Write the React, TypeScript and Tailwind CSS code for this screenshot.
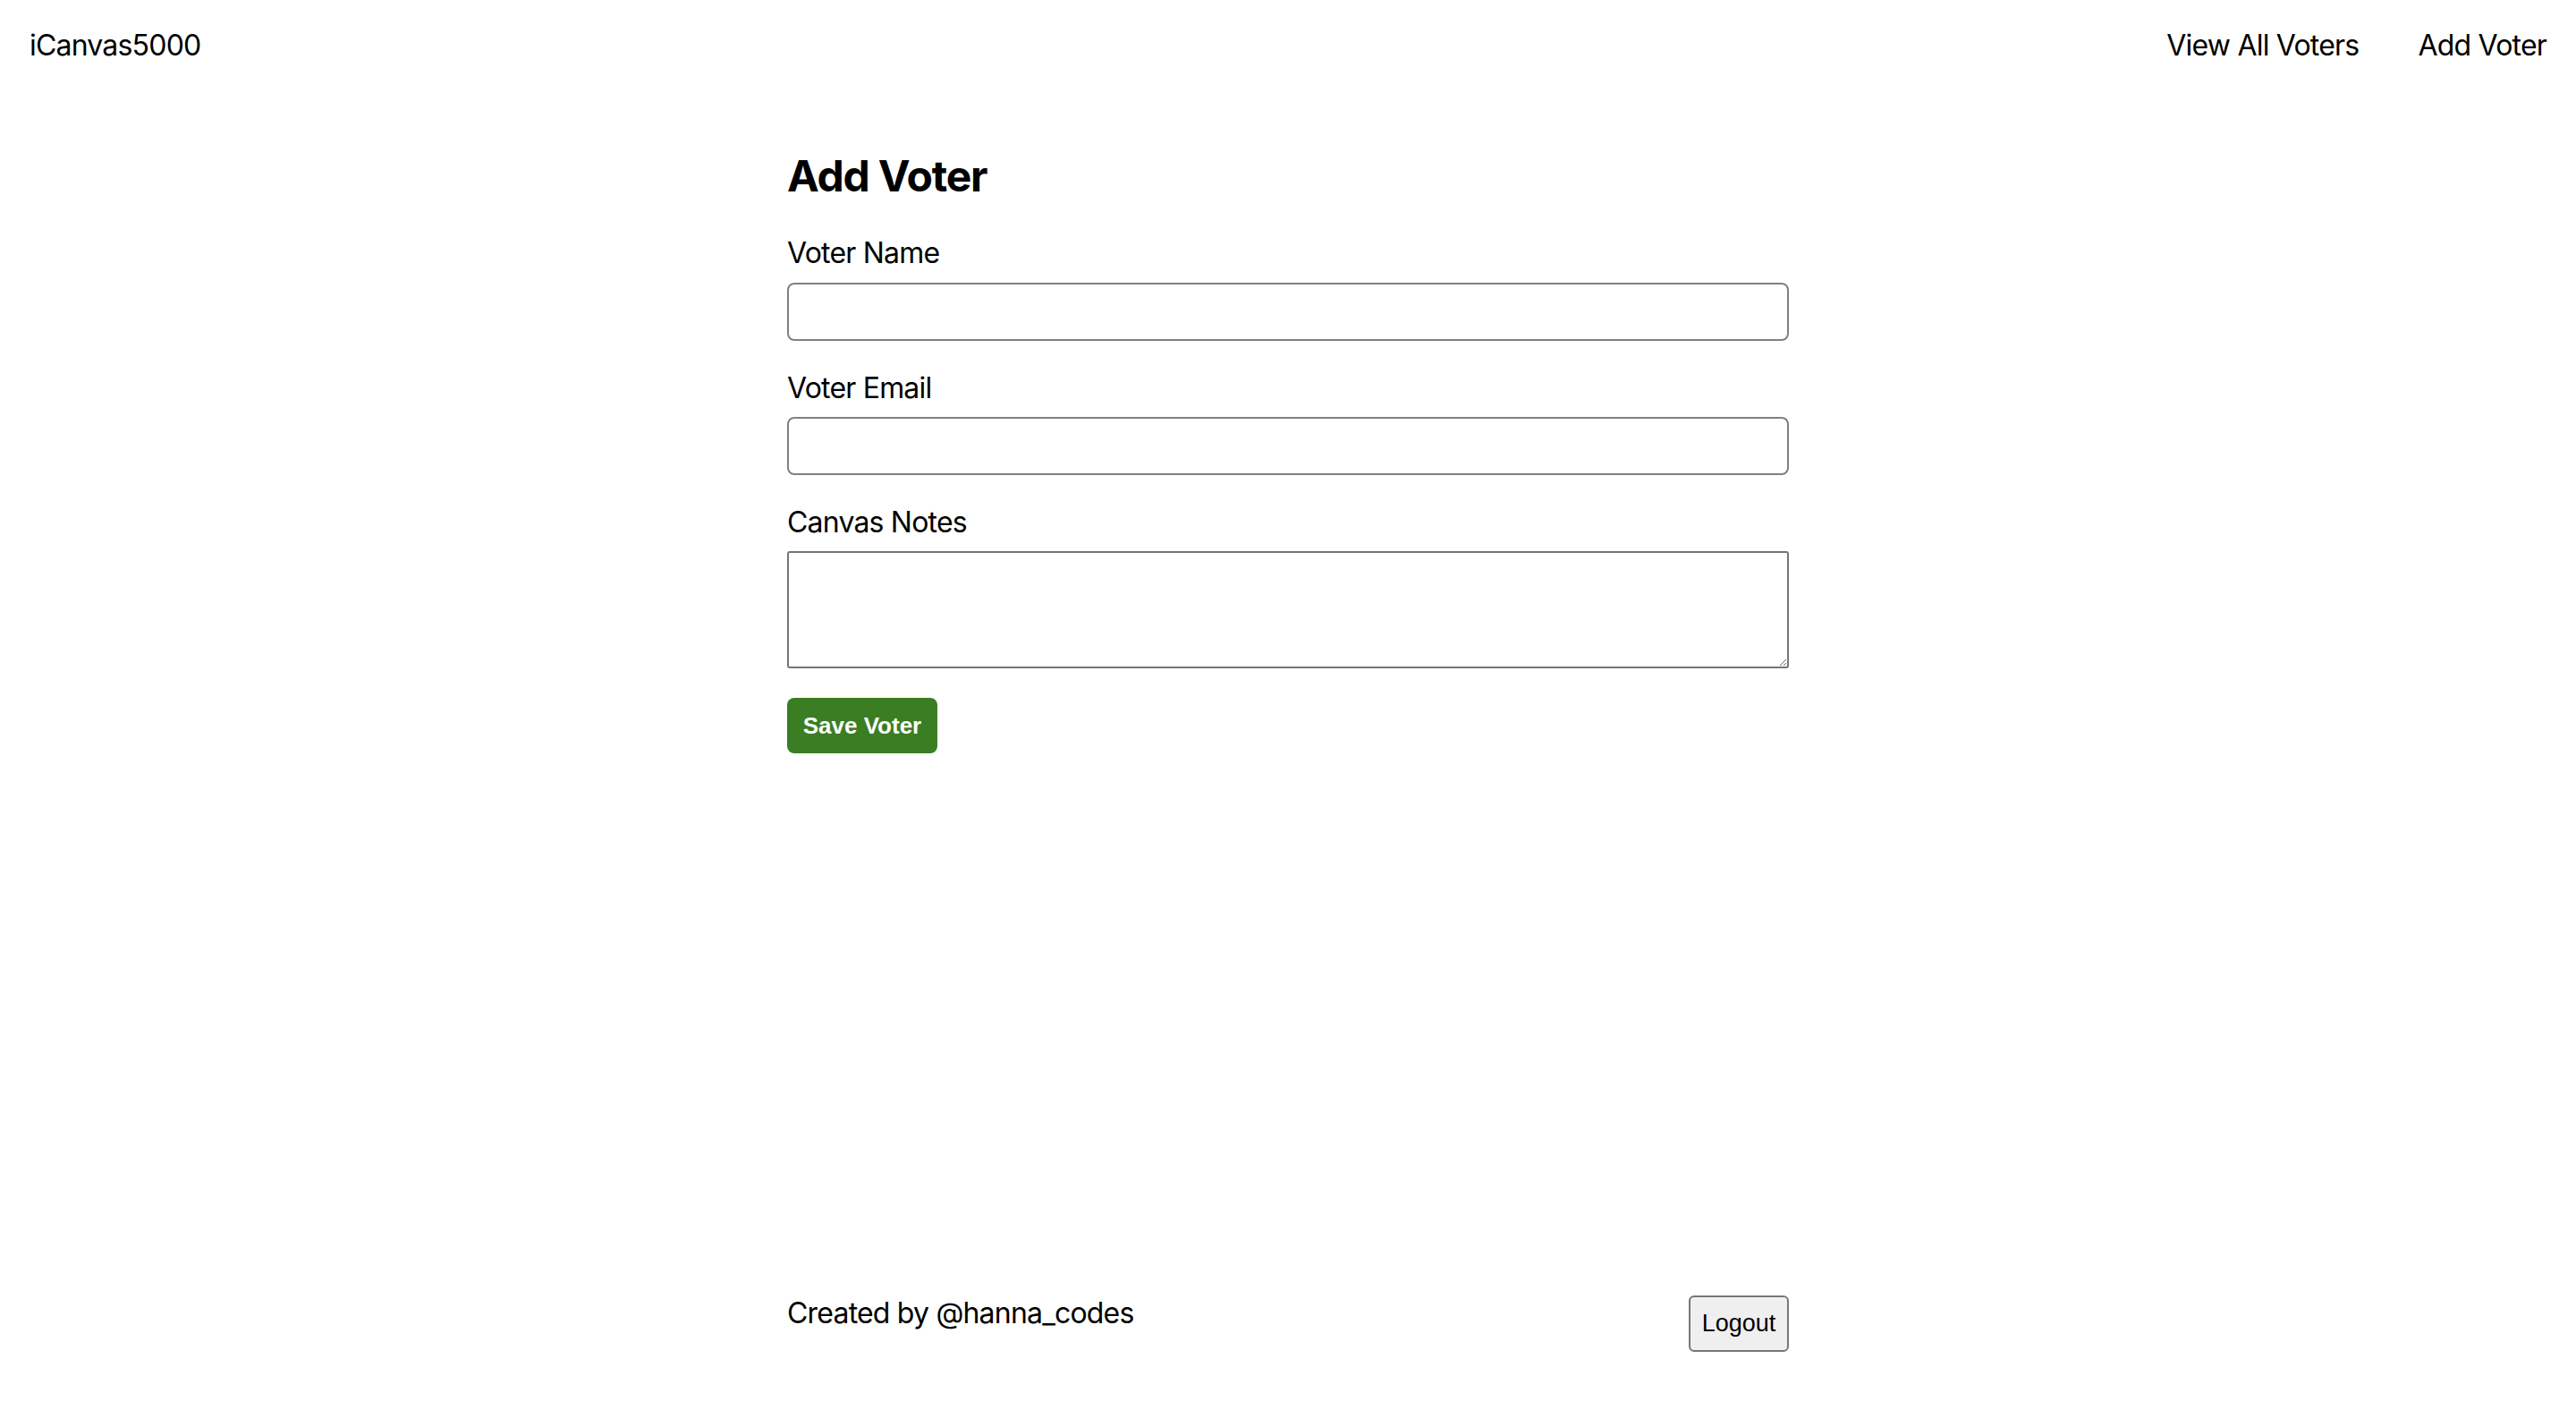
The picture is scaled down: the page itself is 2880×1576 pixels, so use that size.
export default function App() {
    return (
        <div className="min-h-screen flex flex-col bg-white text-black font-['Inter',sans-serif] tracking-[-0.8px]">
            {/* NAV */}
            <header className="h-[100px] flex items-center justify-between px-[33px] pt-[2px] text-[32px]">
                <a className="text-black">iCanvas5000</a>
                <nav className="flex items-center gap-[66px]">
                    <a className="text-black">View All Voters</a>
                    <a className="text-black">Add Voter</a>
                </nav>
            </header>

            {/* FORM */}
            <main className="flex-1 w-[1120px] mx-auto pt-[68px]">
                <h2 className="text-[48px] font-bold leading-[58px] tracking-[-1.2px]">Add Voter</h2>

                <form className="mt-[38px] flex flex-col">
                    <label className="text-[32px] leading-[38px]">Voter Name</label>
                    <input
                        type="text"
                        className="mt-[14px] h-[65px] w-full rounded-[8px] border-2 border-[#808080] px-3 text-[28px]"
                    />

                    <label className="mt-[34px] text-[32px] leading-[38px]">Voter Email</label>
                    <input
                        type="email"
                        className="mt-[13px] h-[65px] w-full rounded-[8px] border-2 border-[#808080] px-3 text-[28px]"
                    />

                    <label className="mt-[34px] text-[32px] leading-[38px]">Canvas Notes</label>
                    <textarea className="mt-[13px] h-[131px] w-full rounded-[3px] border-2 border-[#767676] p-2 text-[28px] resize-y" />

                    <div className="mt-[33px]">
                        <button
                            type="button"
                            className="h-[62px] w-[168px] rounded-[8px] bg-[#3a7d23] text-white text-[26px] font-bold tracking-normal font-['Liberation_Sans',Arial,sans-serif]"
                        >
                            Save Voter
                        </button>
                    </div>
                </form>
            </main>

            {/* FOOTER */}
            <footer className="w-[1120px] mx-auto flex items-start justify-between pb-[65px]">
                <p className="text-[32px] leading-[38px] pt-[1px]">Created by @hanna_codes</p>
                <button
                    type="button"
                    className="h-[63px] w-[112px] rounded-[6px] border-2 border-[#767676] bg-[#efefef] text-[27px] tracking-normal font-['Liberation_Sans',Arial,sans-serif]"
                >
                    Logout
                </button>
            </footer>
        </div>
    );
}
